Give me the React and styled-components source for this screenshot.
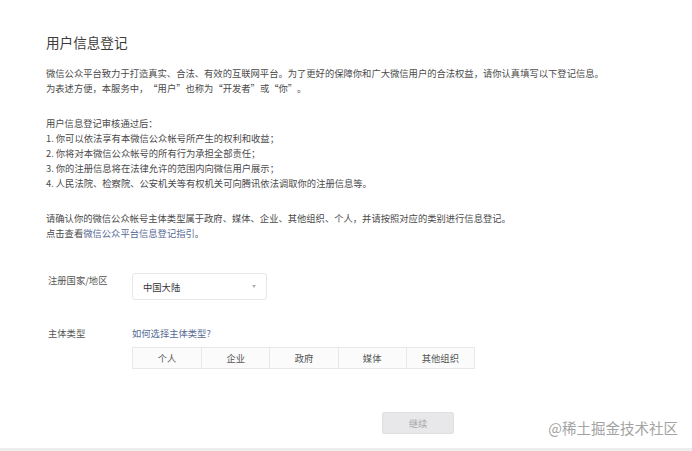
import React from 'react';
import styled, { createGlobalStyle } from 'styled-components';

const GlobalStyle = createGlobalStyle`
  html, body {
    margin: 0;
    padding: 0;
    background: #fff;
  }

  body {
    font-family: "Noto Sans CJK SC", "Microsoft YaHei", sans-serif;
    color: #444;
  }
`;

const Page = styled.div`
  position: relative;
  display: flex;
  flex-direction: column;
  min-height: 451px;
  box-sizing: border-box;
  overflow: hidden;
`;

const Content = styled.main`
  padding: 32px 0 0 46px;
`;

const Title = styled.h2`
  margin: 0;
  font-size: 13.6px;
  line-height: 20px;
  font-weight: normal;
  color: #3c3c3c;
`;

const Paragraph = styled.p`
  margin: ${(p) => p.$top || 20}px 0 0;
  font-size: 9.3px;
  line-height: 15px;
  color: #4a4a4a;
`;

// full-width quote mark: takes a whole em, glyph pushed to the inner side
const QuoteMark = styled.span`
  display: inline-block;
  width: 1em;
  text-align: ${(p) => (p.$open ? 'right' : 'left')};
`;

const Quoted = ({ children }) => (
  <>
    <QuoteMark $open>“</QuoteMark>
    {children}
    <QuoteMark>”</QuoteMark>
  </>
);

const Link = styled.a`
  color: #576b95;
  text-decoration: none;
`;

const Form = styled.section`
  margin-top: 32px;
  padding-left: 2px;
  display: flex;
  flex-direction: column;
  gap: 26px;
`;

const FormRow = styled.div`
  display: flex;
  align-items: flex-start;
`;

const Label = styled.div`
  width: 84px;
  flex-shrink: 0;
  font-size: 9.3px;
  line-height: 15px;
  color: #555;
`;

const Field = styled.div`
  display: flex;
  flex-direction: column;
  gap: 6px;
`;

const Select = styled.div`
  display: flex;
  align-items: center;
  justify-content: space-between;
  box-sizing: border-box;
  width: 135px;
  height: 27px;
  padding: 0 10px 0 10px;
  border: 1px solid #e6e6e6;
  border-radius: 3px;
  font-size: 9.3px;
  color: #353535;
`;

const Caret = styled.span`
  width: 0;
  height: 0;
  border-left: 2.5px solid transparent;
  border-right: 2.5px solid transparent;
  border-top: 3px solid #b0b0b0;
`;

const FieldLink = styled(Link)`
  font-size: 9.3px;
  line-height: 15px;
`;

const Segments = styled.div`
  display: grid;
  grid-template-columns: repeat(5, 68.2px);
  border: 1px solid #e8e8e8;
  background: #fbfbfb;
`;

const Segment = styled.div`
  height: 20px;
  display: flex;
  align-items: center;
  justify-content: center;
  font-size: 9.3px;
  color: #555;
  border-left: ${(p) => (p.$first ? 'none' : '1px solid #e8e8e8')};
`;

const Actions = styled.div`
  margin: 39px 0 0 336px;
`;

const Button = styled.button`
  width: 72px;
  height: 22px;
  padding: 0;
  border: 1px solid #e0e0e3;
  border-radius: 2px;
  background: #e8e8eb;
  font-family: inherit;
  font-size: 9.3px;
  color: #a9a9a9;
`;

const BottomBar = styled.div`
  margin-top: auto;
  height: 3px;
  background: #ededed;
`;

const Watermark = styled.div`
  position: absolute;
  right: 14px;
  bottom: 13px;
  font-size: 14.5px;
  line-height: 20px;
  color: #a3a3a3;
`;

const types = ['个人', '企业', '政府', '媒体', '其他组织'];

const App = () => (
  <>
    <GlobalStyle />
    <Page lang="zh-CN">
      <Content>
        <Title>用户信息登记</Title>
        <Paragraph $top={14}>
          微信公众平台致力于打造真实、合法、有效的互联网平台。为了更好的保障你和广大微信用户的合法权益，请你认真填写以下登记信息。
          <br />
          为表述方便，本服务中，<Quoted>用户</Quoted>也称为<Quoted>开发者</Quoted>或<Quoted>你</Quoted>。
        </Paragraph>
        <Paragraph>
          用户信息登记审核通过后：
          <br />
          1. 你可以依法享有本微信公众帐号所产生的权利和收益；
          <br />
          2. 你将对本微信公众帐号的所有行为承担全部责任；
          <br />
          3. 你的注册信息将在法律允许的范围内向微信用户展示；
          <br />
          4. 人民法院、检察院、公安机关等有权机关可向腾讯依法调取你的注册信息等。
        </Paragraph>
        <Paragraph>
          请确认你的微信公众帐号主体类型属于政府、媒体、企业、其他组织、个人，并请按照对应的类别进行信息登记。
          <br />
          点击查看<Link href="#">微信公众平台信息登记指引</Link>。
        </Paragraph>

        <Form>
          <FormRow>
            <Label>注册国家/地区</Label>
            <Select>
              中国大陆
              <Caret />
            </Select>
          </FormRow>
          <FormRow>
            <Label>主体类型</Label>
            <Field>
              <FieldLink href="#">如何选择主体类型?</FieldLink>
              <Segments>
                {types.map((t, i) => (
                  <Segment key={t} $first={i === 0}>
                    {t}
                  </Segment>
                ))}
              </Segments>
            </Field>
          </FormRow>
        </Form>

        <Actions>
          <Button type="button">继续</Button>
        </Actions>
      </Content>
      <BottomBar />
      <Watermark>@稀土掘金技术社区</Watermark>
    </Page>
  </>
);

export default App;
